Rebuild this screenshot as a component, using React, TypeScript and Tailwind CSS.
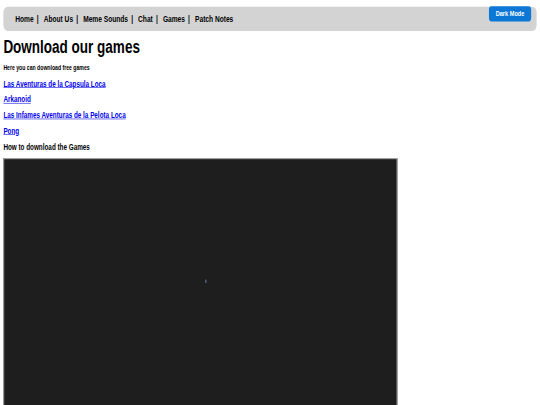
import React from "react";

const navItems = ["Home", "About Us", "Meme Sounds", "Chat", "Games", "Patch Notes"];

const games = [
    "Las Aventuras de la Capsula Loca",
    "Arkanoid",
    "Las Infames Aventuras de la Pelota Loca",
    "Pong",
];

// The page is laid out at 1280x720 and squeezed into the 540x405 frame,
// same as the reference capture.
export default function App() {
    return (
        <div className="w-[540px] h-[405px] overflow-hidden bg-white">
            <div className="relative w-[1280px] h-[720px] origin-top-left [transform:scale(0.421875,0.5625)] px-2 pt-[12px] font-['Liberation_Sans',Arial,sans-serif] font-bold text-black">
                {/* Nav */}
                <nav className="h-[43px] bg-[#d3d3d3] rounded-[10px] flex items-center pl-[28px] text-[15.7px]">
                    {navItems.map((item, i) => (
                        <div key={item} className="flex items-center">
                            <span>{item}</span>
                            {i < navItems.length - 1 && (
                                <span className="ml-[7.5px] mr-[12px]">|</span>
                            )}
                        </div>
                    ))}
                </nav>

                <button className="absolute top-[11px] right-[21px] w-[100px] h-[27px] bg-[#0b78d6] rounded-[6px] text-white text-[13.33px] font-bold">
                    Dark Mode
                </button>

                <h1 className="mt-[10px] text-[32px] leading-[37px]">Download our games</h1>

                <div className="mt-[5px]">
                    <p className="leading-[28px] text-[12.2px]">Here you can download free games</p>
                    {games.map((g) => (
                        <p key={g} className="leading-[28px] text-[15px]">
                            <a href="#" className="text-[#0000ee] underline">
                                {g}
                            </a>
                        </p>
                    ))}
                    <p className="leading-[28px] text-[15px]">How to download the Games</p>
                </div>

                {/* Game frame */}
                <div className="relative mt-[6px] w-[934px] h-[520px] border-2 border-[#a8a8a8] bg-[#1e1e1e]">
                    <div className="absolute left-[477px] top-[214px] w-[2px] h-[6px] bg-[#7f8fb0]" />
                </div>
            </div>
        </div>
    );
}
